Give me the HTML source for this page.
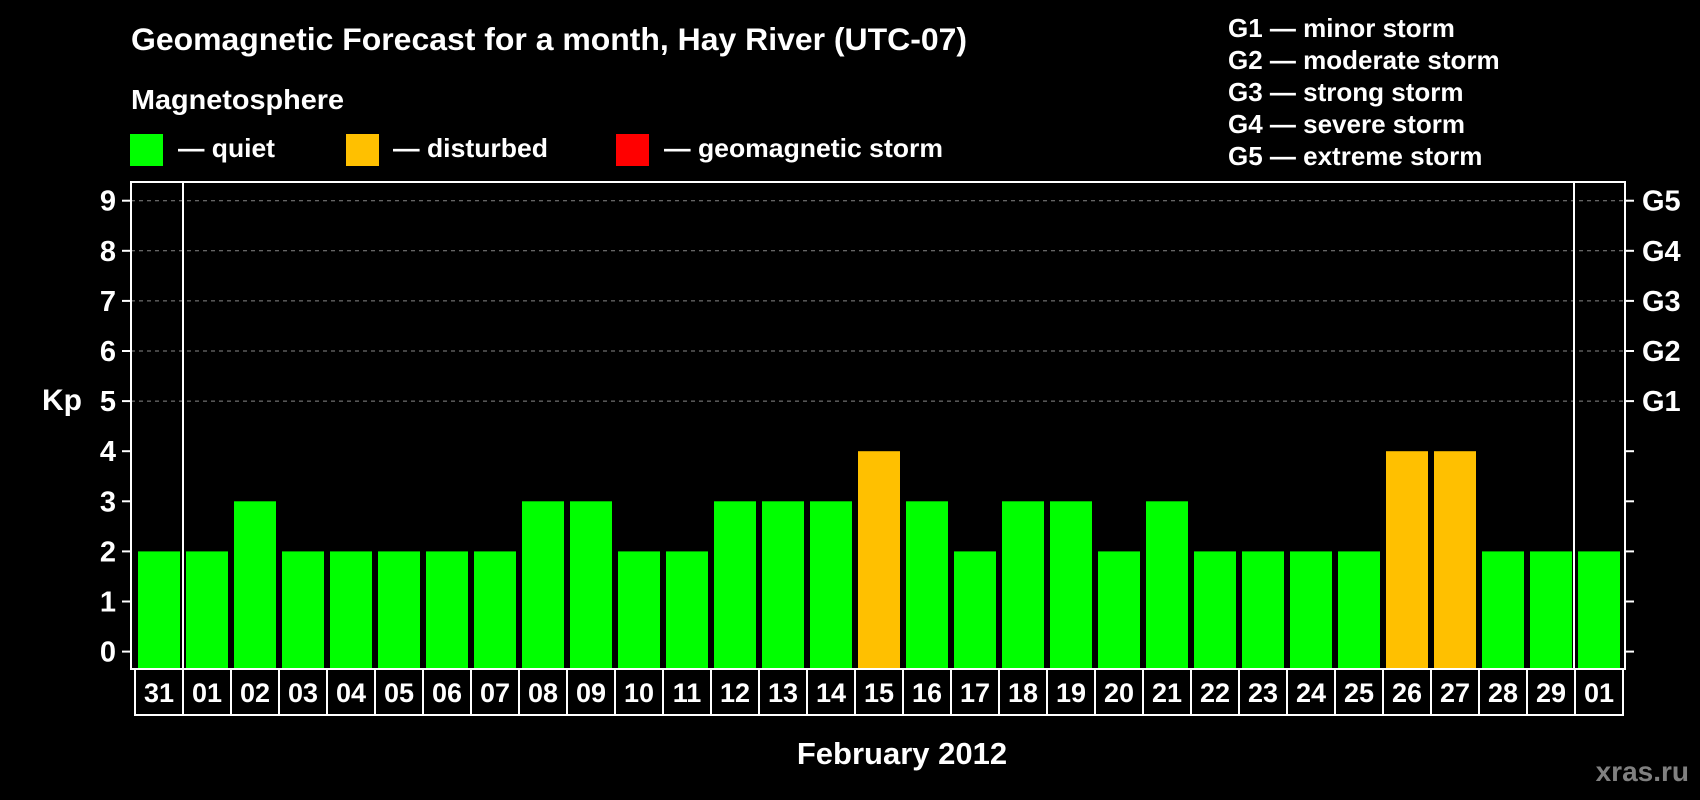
<!DOCTYPE html>
<html><head><meta charset="utf-8"><style>
html,body{margin:0;padding:0;background:#000;width:1700px;height:800px;overflow:hidden}
svg{display:block}
text{font-family:"Liberation Sans",Arial,sans-serif;font-weight:bold;fill:#fff}
</style></head><body>
<svg width="1700" height="800" viewBox="0 0 1700 800" xmlns="http://www.w3.org/2000/svg">
<rect width="1700" height="800" fill="#000"/>
<text x="131" y="50" font-size="31.5" textLength="836" lengthAdjust="spacingAndGlyphs">Geomagnetic Forecast for a month, Hay River (UTC-07)</text>
<text x="131" y="109" font-size="28" textLength="213" lengthAdjust="spacingAndGlyphs">Magnetosphere</text>
<rect x="130" y="134" width="33" height="32" fill="#00ff00"/>
<text x="178" y="157" font-size="26" textLength="97" lengthAdjust="spacingAndGlyphs">— quiet</text>
<rect x="346" y="134" width="33" height="32" fill="#ffc000"/>
<text x="393" y="157" font-size="26" textLength="155" lengthAdjust="spacingAndGlyphs">— disturbed</text>
<rect x="616" y="134" width="33" height="32" fill="#ff0000"/>
<text x="664" y="157" font-size="26" textLength="279" lengthAdjust="spacingAndGlyphs">— geomagnetic storm</text>
<g font-size="26">
<text x="1228" y="37">G1 — minor storm</text>
<text x="1228" y="69">G2 — moderate storm</text>
<text x="1228" y="101">G3 — strong storm</text>
<text x="1228" y="133">G4 — severe storm</text>
<text x="1228" y="165">G5 — extreme storm</text>
</g>
<g id="grid" stroke="#888" stroke-width="1" stroke-dasharray="4,4"></g>
<g id="bars"></g>
<rect x="131" y="182" width="1494" height="487" fill="none" stroke="#fff" stroke-width="2"/>
<line x1="183" x2="183" y1="182" y2="669" stroke="#fff" stroke-width="2"/>
<line x1="1574" x2="1574" y1="182" y2="669" stroke="#fff" stroke-width="2"/>
<g id="ticks" stroke="#fff" stroke-width="2"></g>
<g id="ylab" font-size="29" text-anchor="end"></g>
<g id="glab" font-size="29"></g>
<text x="42" y="410" font-size="30">Kp</text>
<rect x="135" y="669" width="1488" height="46" fill="none" stroke="#fff" stroke-width="2"/>
<g id="xl" font-size="27" text-anchor="middle"></g>
<text x="902" y="764" font-size="31" text-anchor="middle">February 2012</text>
<text x="1689" y="781" font-size="28" text-anchor="end" style="fill:#808080">xras.ru</text>
</svg>
<script>
var ns="http://www.w3.org/2000/svg";
var v=[2,2,3,2,2,2,2,2,3,3,2,2,3,3,3,4,3,2,3,3,2,3,2,2,2,2,4,4,2,2,2];
var lab=["31","01","02","03","04","05","06","07","08","09","10","11","12","13","14","15","16","17","18","19","20","21","22","23","24","25","26","27","28","29","01"];
function el(p,t,a,txt){var e=document.createElementNS(ns,t);for(var k in a)e.setAttribute(k,a[k]);if(txt)e.textContent=txt;document.getElementById(p).appendChild(e);}
var Y0=651.6,U=50.1;
for(var i=0;i<31;i++){var y=Y0-U*v[i];
el("bars","rect",{x:138+48*i,y:y,width:42,height:668-y,fill:v[i]>=4?"#ffc000":"#00ff00"});
el("xl","text",{x:159+48*i,y:702},lab[i]);
if(i>0)el("ticks","line",{x1:135+48*i,x2:135+48*i,y1:669,y2:715});}
for(var k=0;k<=9;k++){var y=Y0-U*k;
el("ticks","line",{x1:122,x2:131,y1:y,y2:y});el("ticks","line",{x1:1625,x2:1634,y1:y,y2:y});
el("ylab","text",{x:116,y:y+10},String(k));
if(k>=5){el("grid","line",{x1:131,x2:1625,y1:y,y2:y});el("glab","text",{x:1642,y:y+10},"G"+(k-4));}}
</script>
</body></html>
